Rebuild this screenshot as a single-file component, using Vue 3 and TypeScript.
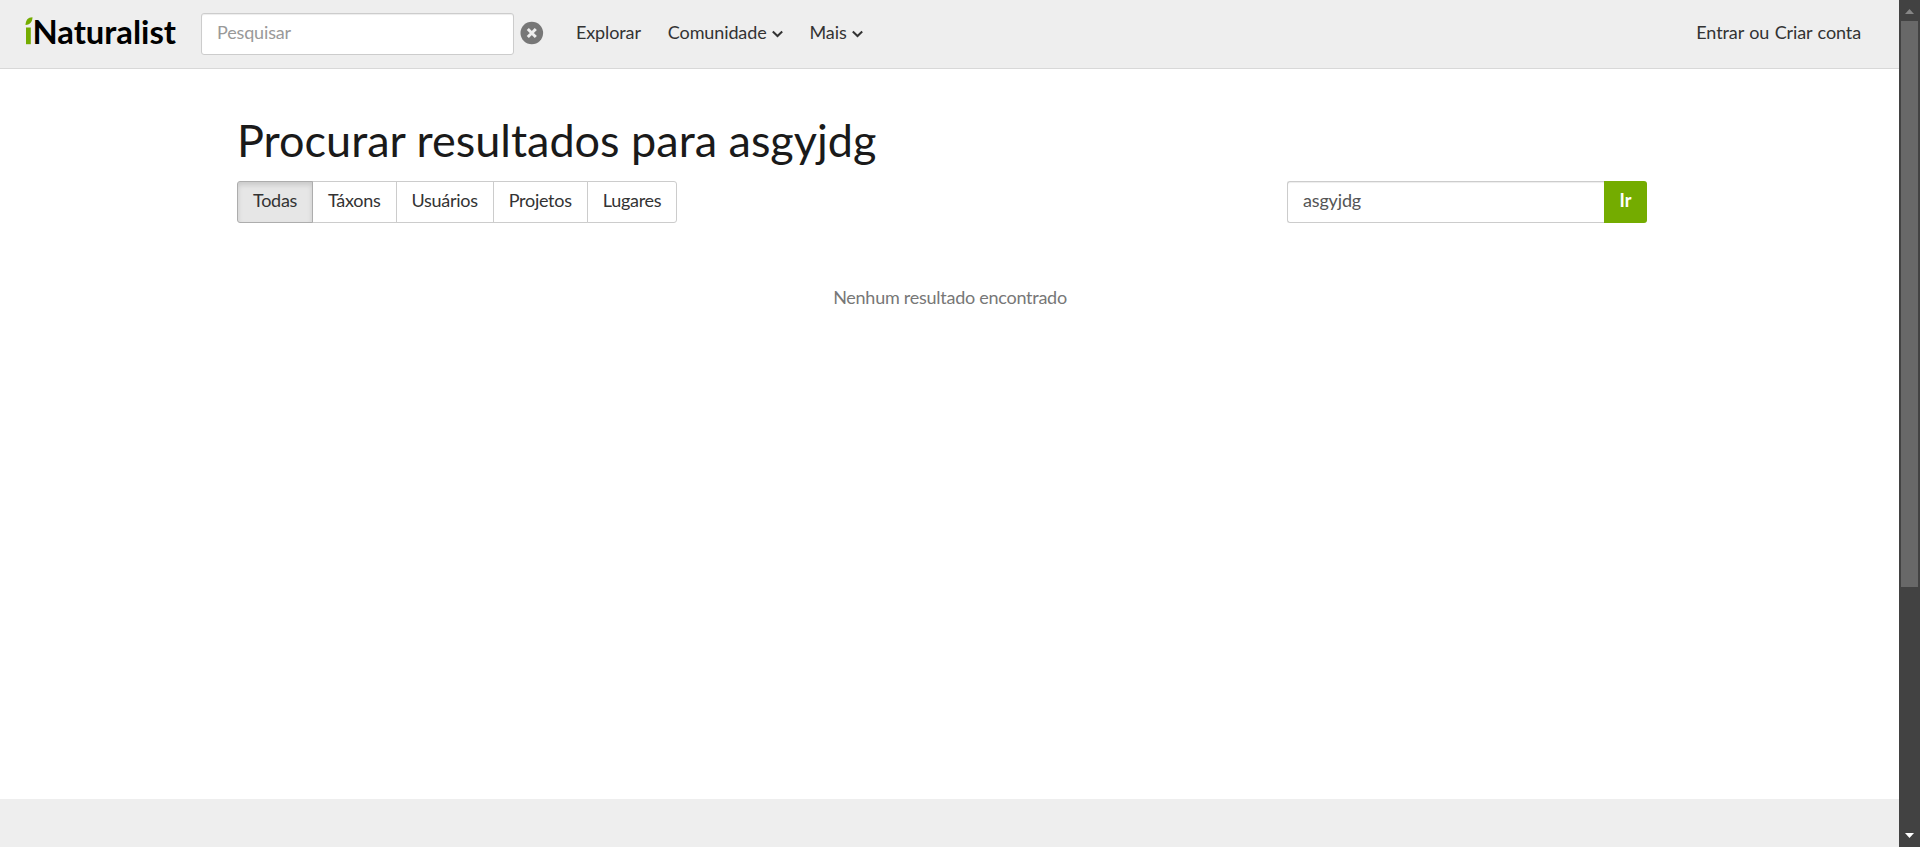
<script setup lang="ts">
import { ref } from 'vue'

interface Tab {
  key: string
  label: string
}

const tabs: Tab[] = [
  { key: 'all', label: 'Todas' },
  { key: 'taxa', label: 'Táxons' },
  { key: 'users', label: 'Usuários' },
  { key: 'projects', label: 'Projetos' },
  { key: 'places', label: 'Lugares' },
]

const active = ref('all')
const headerQuery = ref('')
const query = ref('asgyjdg')
const searched = ref('asgyjdg')
</script>

<template>
  <div class="window">
    <div class="page">
      <header class="bar">
        <a class="logo" aria-label="iNaturalist">
          <svg width="160" height="44" viewBox="0 -4 160 44">
            <path class="green" d="M1 11.5H5.8V28.2H1Z" />
            <path class="green" d="M0.5 9C0.8 4 2.7 1.4 7.5 1.2C7.3 5.5 5.5 8.6 0.5 9Z" />
            <text x="7.5" y="27.5" textLength="143.5" lengthAdjust="spacingAndGlyphs">Naturalist</text>
          </svg>
        </a>
        <input v-model="headerQuery" class="field header-field" type="text" placeholder="Pesquisar" />
        <svg class="clear" width="24" height="24" viewBox="0 0 24 24">
          <circle cx="11.8" cy="12" r="11.3" />
          <path d="M7.8 8L15.8 16M15.8 8L7.8 16" />
        </svg>
        <nav class="nav">
          <a>Explorar</a>
          <a>Comunidade<svg class="chev" width="11" height="8" viewBox="0 0 11 8"><path d="M0.8 1.5L5.5 6L10.2 1.5" /></svg></a>
          <a>Mais<svg class="chev" width="11" height="8" viewBox="0 0 11 8"><path d="M0.8 1.5L5.5 6L10.2 1.5" /></svg></a>
        </nav>
        <div class="account"><a>Entrar</a> <span>ou</span> <a>Criar conta</a></div>
      </header>
      <main class="container">
        <h1>Procurar resultados para {{ searched }}</h1>
        <div class="controls">
          <div class="tabs">
            <button
              v-for="tab in tabs"
              :key="tab.key"
              :class="['tab', tab.key, { active: active === tab.key }]"
              @click="active = tab.key"
            >{{ tab.label }}</button>
          </div>
          <form class="search" @submit.prevent="searched = query">
            <input v-model="query" class="field" type="text" />
            <button class="go">Ir</button>
          </form>
        </div>
        <p class="empty">Nenhum resultado encontrado</p>
      </main>
      <footer class="foot"></footer>
    </div>
    <div class="scroll">
      <svg width="21" height="21" viewBox="0 0 21 21"><path class="up" d="M6 14L10.5 9L15 14Z" /></svg>
      <div class="thumb"></div>
      <svg width="21" height="21" viewBox="0 0 21 21"><path class="down" d="M6 7H15L10.5 12Z" /></svg>
    </div>
  </div>
</template>

<style>
body {
  margin: 0;
  overflow: hidden;
}
</style>

<style scoped>
* {
  box-sizing: border-box;
}
.window {
  display: flex;
  width: 1920px;
  height: 847px;
  font: 18px/26px Lato, sans-serif;
  color: #333;
  background: #fff;
}
.page {
  flex: 1;
  display: flex;
  flex-direction: column;
}
.bar {
  display: flex;
  align-items: flex-start;
  height: 69px;
  background: #eee;
  border-bottom: 1px solid #d8d8d8;
}
.logo {
  margin: 12px 0 0 25px;
  width: 160px;
  height: 44px;
}
.logo svg {
  display: block;
}
.logo text {
  font: 700 32px Lato, sans-serif;
  fill: #000;
}
.green {
  fill: #74ac00;
}
.field {
  height: 42px;
  border: 1px solid #ccc;
  border-radius: 3px;
  padding: 0 15px 4px;
  font: 18px Lato, sans-serif;
  letter-spacing: -0.15px;
  color: #555;
  background: #fff;
  box-shadow: inset 0 1px 1px rgba(0, 0, 0, 0.075);
  outline: none;
}
.field::placeholder {
  color: #999;
  opacity: 1;
}
.header-field {
  width: 313px;
  margin: 13px 0 0 16px;
}
.clear {
  margin: 21px 0 0 6px;
}
.clear circle {
  fill: #777;
}
.clear path {
  fill: none;
  stroke: #eee;
  stroke-width: 3;
}
.nav {
  display: flex;
  gap: 27px;
  margin: 19px 0 0 32px;
  letter-spacing: -0.12px;
}
.chev {
  margin-left: 5px;
  vertical-align: 1px;
}
.chev path {
  fill: none;
  stroke: #333;
  stroke-width: 2;
}
.account {
  margin: 19px 38px 0 auto;
  letter-spacing: -0.1px;
  word-spacing: 0.9px;
}
.container {
  flex: 1;
  width: 1410px;
  margin-left: 237px;
}
h1 {
  margin: 44px 0 13px;
  font-size: 45px;
  line-height: 55px;
  font-weight: 400;
  color: #1a1a1a;
}
.controls {
  display: flex;
  justify-content: space-between;
}
.tabs {
  display: flex;
}
.tab {
  height: 42px;
  margin-left: -1px;
  padding: 0 15px 4px;
  border: 1px solid #ccc;
  background: #fff;
  font: 18px Lato, sans-serif;
  letter-spacing: -0.28px;
  color: #333;
}
.tab:first-child {
  margin-left: 0;
  border-radius: 3px 0 0 3px;
}
.tab:last-child {
  border-radius: 0 3px 3px 0;
}
.tab.active {
  position: relative;
  background: #e6e6e6;
  border-color: #adadad;
  box-shadow: inset 0 3px 5px rgba(0, 0, 0, 0.125);
}
.search {
  display: flex;
}
.search .field {
  width: 317px;
  border-right: 0;
  border-radius: 3px 0 0 3px;
}
.go {
  width: 43px;
  height: 42px;
  padding: 0 0 4px;
  border: 0;
  border-radius: 0 3px 3px 0;
  background: #74ac00;
  color: #fff;
  font: 700 18px Lato, sans-serif;
}
.empty {
  margin: 61px 0 0 16px;
  width: 1394px;
  text-align: center;
  letter-spacing: -0.26px;
  color: #777;
}
.foot {
  height: 48px;
  background: #eee;
}
.scroll {
  width: 21px;
  background: #424242;
  display: flex;
  flex-direction: column;
}
.scroll svg {
  flex: none;
  display: block;
}
.scroll svg:last-child {
  margin-top: auto;
}
.thumb {
  width: 17px;
  height: 566px;
  margin-left: 2px;
  background: #686868;
}
.up {
  fill: #868686;
}
.down {
  fill: #fff;
}
</style>
